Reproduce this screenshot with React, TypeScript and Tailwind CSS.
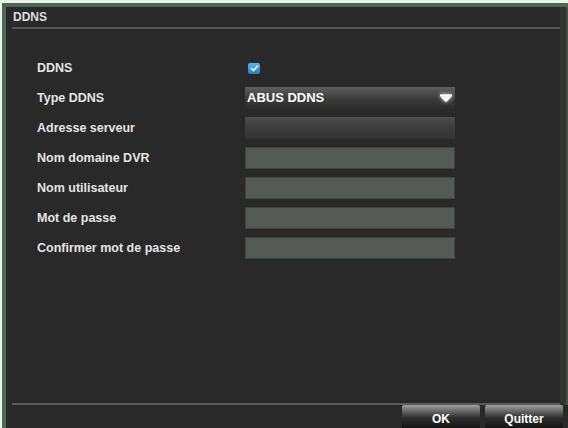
import React from "react";

const font = { fontFamily: '"Liberation Sans", Arial, sans-serif' };

function Label({ children }: { children: React.ReactNode }) {
  return (
    <div className="w-[208px] text-[12.5px] font-bold text-[#e4e4e4]">{children}</div>
  );
}

function Field() {
  return <div className="w-[210px] h-[22px] bg-[#565a57] border border-[#3f4340]" />;
}

export default function App() {
  return (
    <div className="w-[568px] h-[428px] overflow-hidden bg-[#eef2ee] pt-[3px] pl-[2px] flex" style={font}>
      <div className="flex-1 flex flex-col border-t-[4px] border-l-[4px] border-[#4b6a53] bg-[#292929]">
        <div className="flex-1 flex flex-col border-r-[8px] border-[#323432] relative">
          <div className="absolute right-[-8px] top-0 bottom-0 w-[2px] bg-[#4a4c4a]" />
          <div className="h-[20px] pl-[7px] flex items-center text-[12px] font-bold text-[#dedede]">DDNS</div>
          <div className="h-[2px] ml-[6px] bg-[#585858]" />
          <div className="flex-1 pt-[24px] pl-[31px] flex flex-col">
            <div className="h-[30px] flex items-center">
              <Label>DDNS</Label>
              <div className="ml-[3px] w-[12px] h-[11px] rounded-[2px] bg-gradient-to-b from-[#5cb3ea] to-[#2b7bbd] flex items-center justify-center">
                <svg width="9" height="8" viewBox="0 0 9 8">
                  <path d="M1 4 L3.5 6.5 L8 1.5" stroke="#e8f4ff" strokeWidth="1.6" fill="none" />
                </svg>
              </div>
            </div>
            <div className="h-[30px] flex items-center">
              <Label>Type DDNS</Label>
              <div className="w-[210px] h-[22px] bg-gradient-to-b from-[#5e5e5e] via-[#3e3e3e] to-[#2c2c2c] flex items-center justify-between pl-[2px] pr-[3px]">
                <span className="text-[13px] font-bold text-white">ABUS DDNS</span>
                <svg width="12" height="9" viewBox="0 0 13 9" className="drop-shadow-[0_0_2px_rgba(255,255,255,0.8)]">
                  <rect x="0" y="0" width="13" height="2" fill="#ffffff" />
                  <path d="M0 2 L13 2 L6.5 8.5 Z" fill="#ffffff" />
                </svg>
              </div>
            </div>
            <div className="h-[30px] flex items-center">
              <Label>Adresse serveur</Label>
              <div className="w-[210px] h-[22px] bg-gradient-to-b from-[#4d4d4d] via-[#3c3c3c] to-[#333333]" />
            </div>
            <div className="h-[30px] flex items-center">
              <Label>Nom domaine DVR</Label>
              <Field />
            </div>
            <div className="h-[30px] flex items-center">
              <Label>Nom utilisateur</Label>
              <Field />
            </div>
            <div className="h-[30px] flex items-center">
              <Label>Mot de passe</Label>
              <Field />
            </div>
            <div className="h-[30px] flex items-center">
              <Label>Confirmer mot de passe</Label>
              <Field />
            </div>
          </div>
          <div className="h-[2px] ml-[6px] bg-[#5c5c5c]" />
        </div>
        <div className="h-[23px] flex justify-end gap-[5px] pr-[5px]">
          <div className="w-[78px] h-[26px] rounded-t-[2px] bg-gradient-to-b from-[#a0a0a0] via-[#2e2e2e] to-[#0c0c0c] flex items-start justify-center pt-[5px] text-[12px] font-bold text-white">OK</div>
          <div className="w-[78px] h-[26px] rounded-t-[2px] bg-gradient-to-b from-[#a0a0a0] via-[#2e2e2e] to-[#0c0c0c] flex items-start justify-center pt-[5px] text-[12px] font-bold text-white">Quitter</div>
        </div>
      </div>
    </div>
  );
}
